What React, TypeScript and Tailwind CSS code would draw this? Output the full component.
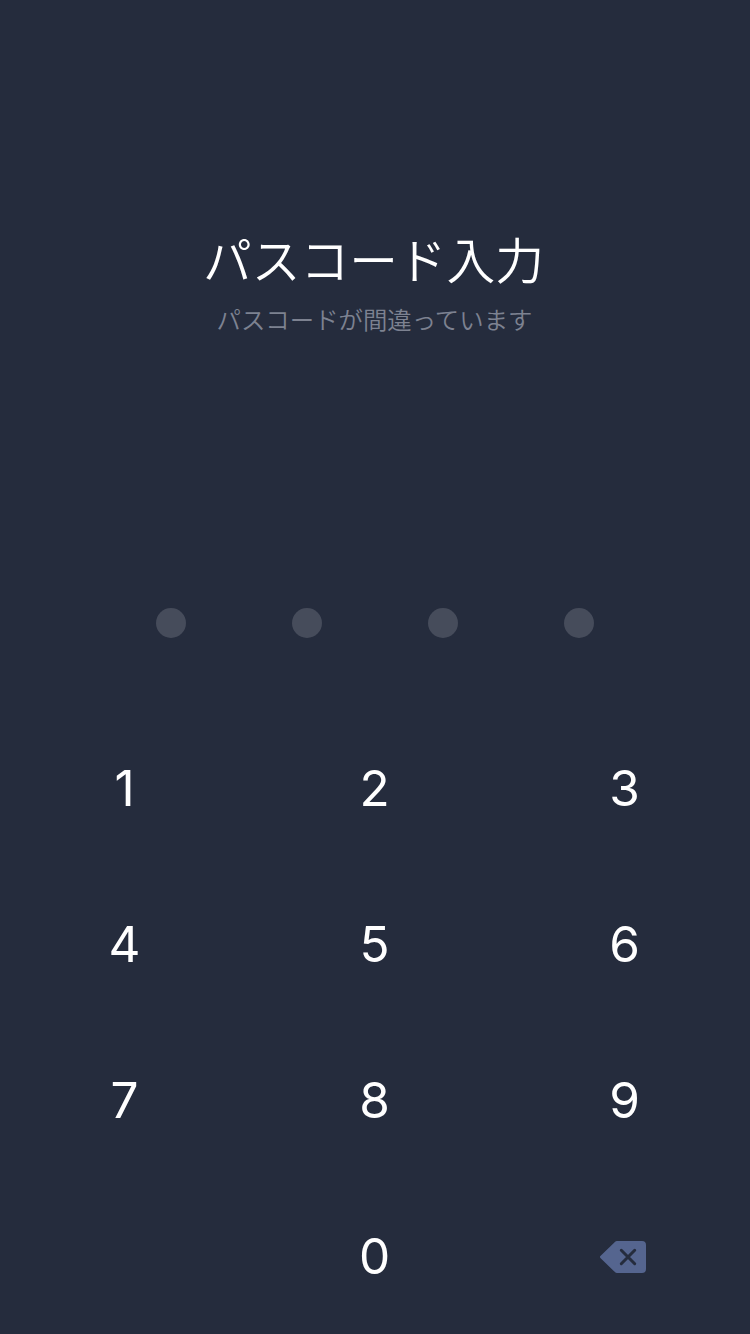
const digits = ["1", "2", "3", "4", "5", "6", "7", "8", "9", "", "0"];

function DeleteIcon() {
  return (
    <svg width="46" height="32" viewBox="0 0 46 32" aria-label="削除">
      <path d="M17 0H42a4 4 0 0 1 4 4v24a4 4 0 0 1-4 4H17a3 3 0 0 1-2.1-.9L.4 16.9a1.3 1.3 0 0 1 0-1.8L14.9.9A3 3 0 0 1 17 0Z" fill="#55658f" />
      <path d="m21.3 9.3 13.4 13.4M34.7 9.3 21.3 22.7" stroke="#252c3d" strokeWidth="3" strokeLinecap="round" />
    </svg>
  );
}

export default function App() {
  return (
    <main className="flex h-[1334px] w-[750px] flex-col overflow-hidden bg-[#252c3d] font-['Inter','Noto_Sans_CJK_JP',sans-serif] text-white">
      <header className="flex h-[608px] shrink-0 flex-col items-center pt-[223px]">
        <h1 className="h-[70px] whitespace-nowrap pr-[3px] font-['Noto_Sans_CJK_JP',sans-serif] text-[48.7px] leading-[70px] font-[350]">パスコード入力</h1>
        <p className="mt-[8px] h-[36px] whitespace-nowrap pr-px font-['Noto_Sans_CJK_JP',sans-serif] text-[24.4px] leading-[36px] font-[350] text-[#7d8291]">パスコードが間違っています</p>
      </header>
      <div className="flex h-[30px] shrink-0 justify-between px-[156px]">
        {[0, 1, 2, 3].map((i) => (
          <span key={i} className="size-[30px] rounded-full bg-[#464c5b]" />
        ))}
      </div>
      <div className="mt-[73px] grid shrink-0 auto-rows-[156px] grid-cols-3">
        {digits.map((d, i) => (
          <button key={i} className="flex items-center justify-center pb-0.5 pr-px text-[49.5px] leading-[50px]">{d}</button>
        ))}
        <button className="flex items-center justify-center pr-1"><DeleteIcon /></button>
      </div>
    </main>
  );
}
